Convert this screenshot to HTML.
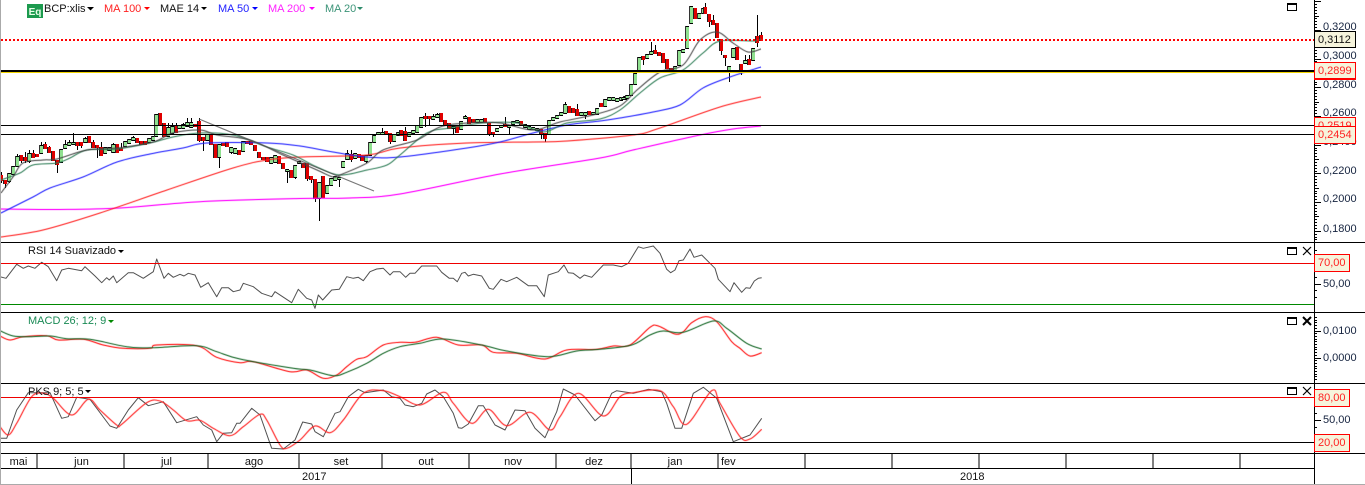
<!DOCTYPE html>
<html><head><meta charset="utf-8"><title>BCP:xlis</title>
<style>
html,body{margin:0;padding:0;background:#fff;width:1365px;height:485px;overflow:hidden}
#w{position:relative;width:1365px;height:485px;overflow:hidden;font:11px/13px "Liberation Sans",Arial,sans-serif;color:#111}
svg{position:absolute;left:0;top:0}
.t{position:absolute;white-space:nowrap}
.a{position:absolute;left:1323px;white-space:nowrap;color:#15233f}
.b{position:absolute;left:1314px;box-sizing:border-box;background:#f6f4dc;border:1px solid #f00;color:#f22;height:17px;line-height:16px;padding-left:3px;width:42px}
.c{text-align:center;position:absolute;top:456px;white-space:nowrap}
</style></head><body><div id="w">
<svg id="s" width="1365" height="485" viewBox="0 0 1365 485" xmlns="http://www.w3.org/2000/svg">
<g id="cv"></g>
<g id="ln" fill="none"></g>
<g id="fx" shape-rendering="crispEdges">
<rect x="0" y="0" width="1" height="485" fill="#aaa"/>
<rect x="0" y="484" width="1365" height="1" fill="#aaa"/>
<line x1="1" y1="40" x2="1314" y2="40" stroke="#f00" stroke-width="2" stroke-dasharray="2 2"/>
<rect x="1" y="70" width="1313" height="2" fill="#000"/>
<rect x="1" y="72" width="1313" height="1" fill="#f2d400"/>
<rect x="1" y="125" width="1313" height="1" fill="#000"/>
<rect x="1" y="134" width="1313" height="1" fill="#000"/>
<rect x="1" y="263" width="1313" height="1" fill="#e00"/>
<rect x="1" y="304" width="1313" height="1" fill="#080"/>
<rect x="1" y="397" width="1313" height="1" fill="#e00"/>
<rect x="1" y="442" width="1313" height="1" fill="#000"/>
<rect x="1" y="242" width="1364" height="1" fill="#000"/>
<rect x="1" y="312" width="1364" height="1" fill="#000"/>
<rect x="1" y="383" width="1364" height="1" fill="#000"/>
<rect x="1" y="453" width="1364" height="1" fill="#000"/>
<rect x="1" y="468" width="1313" height="1" fill="#000"/>
<rect x="1314" y="0" width="1" height="484" fill="#000"/>
<rect x="631" y="468" width="1" height="16" fill="#000"/>
<path id="vt" d="M37 453v15M124 453v15M208 453v15M299 453v15M382 453v15M469 453v15M556 453v15M631 453v15M718 453v15M805 453v15M892 453v15M979 453v15M1066 453v15M1153 453v15M1240 453v15" stroke="#000" fill="none"/>
<path id="tk" stroke="#000" fill="none"/>
<g fill="none" stroke="#000">
<rect x="1287.5" y="3.5" width="9" height="7"/><path d="M1287 4.5h10"/>
<rect x="1287.5" y="247.5" width="9" height="7"/><path d="M1287 248.5h10"/>
<rect x="1287.5" y="317.5" width="9" height="7"/><path d="M1287 318.5h10"/>
<rect x="1287.5" y="387.5" width="9" height="7"/><path d="M1287 388.5h10"/>
</g>
</g>
<g stroke="#000" fill="none">
<path d="M1303 247l8 8M1311 247l-8 8" stroke-width="1.2"/>
<path d="M1303 317l8 8M1311 317l-8 8" stroke-width="2"/>
<path d="M1303 387l8 8M1311 387l-8 8" stroke-width="1.2"/>
</g>
<g fill="#000">
<path d="M87 7h7l-3.5 3.5z"/>
<path d="M144 7h6l-3 3z" fill="#f00"/>
<path d="M201 7h6l-3 3z"/>
<path d="M252 7h6l-3 3z" fill="#00f"/>
<path d="M309 7h6l-3 3z" fill="#f0f"/>
<path d="M357 7h6l-3 3z" fill="#2e8b6b"/>
<path d="M118 250h6l-3 3z"/>
<path d="M108 320h6l-3 3z" fill="#080"/>
<path d="M85 390h6l-3 3z"/>
</g>
<rect x="27" y="4" width="16" height="14" fill="#1c9a4e"/>
<text x="35" y="15" fill="#e8ffe8" font-family="Liberation Sans" font-size="10" font-weight="bold" text-anchor="middle">Eq</text>
</svg>
<div class="t" style="left:44px;top:3px">BCP:xlis</div>
<div class="t" style="left:104px;top:3px;color:#f22">MA 100</div>
<div class="t" style="left:160px;top:3px;color:#111">MAE 14</div>
<div class="t" style="left:218px;top:3px;color:#22f">MA 50</div>
<div class="t" style="left:268px;top:3px;color:#f2f">MA 200</div>
<div class="t" style="left:325px;top:3px;color:#3c9478">MA 20</div>
<div class="t" style="left:28px;top:245px">RSI 14 Suavizado</div>
<div class="t" style="left:28px;top:315px;color:#1a8a55">MACD 26; 12; 9</div>
<div class="t" style="left:28px;top:386px">PKS 9; 5; 5</div>
<div class="a" style="top:21px">0,3200</div>
<div class="a" style="top:50px">0,3000</div>
<div class="a" style="top:79px">0,2800</div>
<div class="a" style="top:107px">0,2600</div>
<div class="a" style="top:136px">0,2400</div>
<div class="a" style="top:165px">0,2200</div>
<div class="a" style="top:193px">0,2000</div>
<div class="a" style="top:223px">0,1800</div>
<div class="a" style="top:278px">50,00</div>
<div class="a" style="top:325px">0,0100</div>
<div class="a" style="top:352px">0,0000</div>
<div class="a" style="top:414px">50,00</div>
<div class="b" style="top:31px;border-color:#000;color:#111">0,3112</div>
<div class="b" style="top:62px;height:18px;border-width:1px 1px 2px 1px">0,2899</div>
<div class="b" style="top:117px">0,2519</div>
<div class="b" style="top:126px;height:18px">0,2454</div>
<div class="b" style="top:254px;width:36px;height:18px">70,00</div>
<div class="b" style="top:389px;width:36px;height:18px">80,00</div>
<div class="b" style="top:434px;width:36px;height:18px">20,00</div>
<div class="c" style="left:0;width:37px">mai</div>
<div class="c" style="left:38px;width:87px">jun</div>
<div class="c" style="left:125px;width:83px">jul</div>
<div class="c" style="left:209px;width:90px">ago</div>
<div class="c" style="left:300px;width:82px">set</div>
<div class="c" style="left:383px;width:86px">out</div>
<div class="c" style="left:470px;width:86px">nov</div>
<div class="c" style="left:557px;width:74px">dez</div>
<div class="c" style="left:632px;width:86px">jan</div>
<div class="t" style="left:721px;top:456px">fev</div>
<div class="t" style="left:302px;top:471px">2017</div>
<div class="t" style="left:960px;top:471px">2018</div>
</div>
<script>
var NS='http://www.w3.org/2000/svg';
function mk(p,n,a){var e=document.createElementNS(NS,n);for(var k in a)e.setAttribute(k,a[k]);p.appendChild(e);return e}
var c1=[[4,0,525,540,515,550],[16,0,541,549,0,565],[28,1,520,543,0,550],[40,1,497,522,0,0],[52,1,469,497,462,0],[64,0,465,480,0,490],[76,0,470,480,455,490],[88,1,460,482,450,490],[100,0,460,470,450,0],[112,0,462,466,0,0],[124,1,435,458,425,0],[136,0,433,445,425,0],[148,0,441,455,437,460],[160,0,453,481,0,0],[172,0,481,493,0,520],[184,1,447,485,0,0],[196,1,432,445,420,0],[208,1,427,435,420,0],[220,1,427,432,400,0],[232,0,427,435,0,450],[244,0,427,435,0,445],[256,1,413,426,410,0],[268,0,408,425,0,0],[280,0,425,440,420,0],[292,0,434,440,0,475],[304,0,440,465,425,0],[316,1,442,458,0,0],[328,1,440,450,0,0],[340,1,432,455,428,0],[352,0,432,455,0,0],[364,0,445,450,430,0],[376,1,423,438,0,0],[388,1,416,428,0,0],[400,1,411,420,407,0],[412,0,414,427,0,0],[424,0,423,432,0,0],[436,0,423,431,0,0],[448,1,415,426,0,0],[460,1,407,420,0,0],[469,1,343,407,0,0],[481,0,339,375,0,0],[493,0,370,407,0,0],[505,1,380,407,368,0],[517,1,378,398,368,0],[529,0,375,397,368,0],[538,1,376,385,0,0],[550,1,372,385,368,0],[562,1,365,378,355,0],[574,1,367,382,355,0],[586,0,372,378,0,0],[598,0,362,421,355,425],[610,0,411,420,0,452],[622,1,403,420,0,0],[634,0,405,432,0,0],[646,0,432,472,0,0],[658,1,432,472,0,503],[670,0,428,436,0,0],[682,0,425,438,0,0],[694,1,440,455,0,462],[706,1,443,458,0,0],[718,0,450,462,0,0],[730,1,424,452,0,0],[742,0,424,430,0,0],[754,0,422,432,0,0],[766,0,435,450,0,0],[778,0,456,470,0,0],[790,0,470,475,0,0],[802,0,470,482,0,0],[814,1,470,488,0,0],[826,1,466,485,0,0],[838,0,468,488,0,0],[850,0,490,505,0,0],[862,1,508,513,0,548],[874,0,510,530,0,0],[886,1,495,530,0,538],[898,1,482,490,0,0],[910,0,490,500,0,0],[922,0,490,533,0,543],[934,0,528,536,0,550],[946,0,537,595,0,605],[958,1,546,595,0,662],[970,0,527,590,0,0],[982,1,555,578,0,0],[994,1,535,555,0,0],[1006,1,527,540,0,0],[1018,1,530,538,0,562],[1030,1,484,502,0,0],[1042,1,458,476,450,0],[1054,0,462,478,450,485],[1066,1,460,475,0,0],[1076,0,462,470,0,0],[1086,0,466,481,0,0],[1098,1,465,482,0,488],[1110,1,425,465,0,0],[1122,1,405,425,0,0],[1134,1,397,403,0,0],[1146,1,395,402,385,0],[1158,0,393,403,0,0],[1170,0,400,423,0,433],[1182,1,403,423,0,0],[1194,1,397,404,0,0]];
var c2=[[304,0,150,165,0,0],[316,0,153,180,140,0],[328,1,157,167,0,0],[340,1,150,160,0,0],[352,1,135,157,0,0],[364,1,112,140,0,0],[376,0,108,115,100,140],[388,0,108,115,0,138],[400,1,108,116,102,0],[412,1,102,112,98,0],[424,0,100,122,0,0],[436,0,120,133,0,0],[448,0,130,143,0,0],[460,1,137,143,0,162],[472,0,135,155,0,0],[484,1,122,147,0,0],[496,1,108,115,105,0],[508,0,110,128,0,0],[520,0,118,127,0,0],[532,1,118,127,0,0],[544,1,118,127,0,0],[556,0,115,127,0,0],[568,0,130,158,0,168],[580,0,157,162,0,170],[592,1,145,152,0,0],[604,1,135,142,0,0],[616,0,132,138,110,0],[628,1,135,142,0,162],[640,1,123,132,0,0],[652,1,120,127,0,0],[664,0,123,135,0,0],[676,1,132,140,0,0],[688,1,138,147,0,0],[700,1,142,148,0,0],[712,1,143,148,0,0],[724,0,148,162,0,178],[736,0,158,175,0,185],[748,1,120,162,0,0],[760,1,112,120,0,0],[772,1,105,113,0,0],[784,1,97,105,0,0],[796,1,72,100,67,0],[808,0,77,95,0,0],[820,0,85,95,0,0],[832,0,88,105,72,0],[844,1,95,105,0,0],[856,1,95,105,0,118],[868,0,93,103,0,0],[880,1,95,103,0,0],[892,1,85,103,0,0],[904,0,70,78,0,0],[916,1,57,77,0,0],[928,1,52,60,0,0],[940,1,52,60,0,0],[952,1,55,62,0,0],[964,1,52,60,0,0],[976,1,47,58,0,0]];
var c3=[[8,1,292,298,0,0],[20,1,286,294,0,0],[32,1,252,285,0,0],[44,1,220,252,0,0],[56,1,172,210,0,0],[68,0,168,177,0,195],[80,1,163,175,0,0],[92,1,153,162,127,0],[104,0,150,158,135,0],[116,0,156,165,0,0],[128,0,158,185,0,0],[140,0,178,205,0,0],[152,0,204,212,0,0],[164,1,198,212,0,0],[176,1,150,195,0,0],[188,1,148,156,0,0],[200,1,78,145,0,0],[212,1,18,68,0,0],[224,0,24,55,0,0],[236,1,38,55,0,0],[248,1,24,38,0,0],[256,0,20,40,10,0],[268,0,42,62,0,80],[280,0,60,72,45,0],[292,0,70,110,0,0],[304,0,118,150,0,165],[316,0,165,172,0,198],[328,1,198,212,0,245],[340,1,143,172,0,0],[352,0,140,178,0,0],[364,0,192,212,0,225],[376,1,180,188,165,0],[388,0,176,192,165,0],[400,1,143,180,0,0],[412,0,108,125,45,140],[424,0,105,120,97,0]];
var cv=document.getElementById('cv');
function dc(arr,ox,oy){arr.forEach(function(d){
 var n=Math.round(ox+d[0]/3),t=Math.round(oy+d[2]/3),b=Math.round(oy+d[3]/3);
 var h=d[4]?oy+d[4]/3:t,l=d[5]?oy+d[5]/3:b;
 mk(cv,'rect',{x:n,y:Math.round(h),width:1,height:Math.max(1,Math.round(l)-Math.round(h)),fill:'#000','shape-rendering':'crispEdges'});
 var ht=Math.max(2,b-t);
 if(d[1]){
  mk(cv,'rect',{x:n-1,y:t,width:3,height:ht+1,fill:'#000','shape-rendering':'crispEdges'});
  mk(cv,'rect',{x:n-1,y:t+1,width:3,height:Math.max(1,ht-1),fill:'#8fe08f','shape-rendering':'crispEdges'});
  mk(cv,'rect',{x:n-2,y:t,width:1,height:ht+1,fill:'#333','shape-rendering':'crispEdges'});
 }else{
  mk(cv,'rect',{x:n-1,y:t,width:3,height:ht+1,fill:'#e00000','shape-rendering':'crispEdges'});
  mk(cv,'rect',{x:n-2,y:t,width:1,height:ht+1,fill:'#222','shape-rendering':'crispEdges'});
 }
});}
dc(c1,0,0);dc(c2,300,80);dc(c3,620,0);
var ln=document.getElementById('ln');
function sm(p){var d='M'+p[0][0]+' '+p[0][1];for(var i=0;i<p.length-1;i++){var a=p[i-1]||p[i],b=p[i],c=p[i+1],e=p[i+2]||c;
 d+='C'+(b[0]+(c[0]-a[0])/6).toFixed(1)+' '+(b[1]+(c[1]-a[1])/6).toFixed(1)+' '+(c[0]-(e[0]-b[0])/6).toFixed(1)+' '+(c[1]-(e[1]-b[1])/6).toFixed(1)+' '+c[0]+' '+c[1]}return d}
function pl(pts,col,w,op){
 var d=sm(pts);
 mk(ln,'path',{d:d,stroke:col,'stroke-width':2.2,'stroke-opacity':.22});
 mk(ln,'path',{d:d,stroke:col,'stroke-width':w||1,'stroke-opacity':op||.75});
}
function rl(pts,col,w,op){mk(ln,'polyline',{points:pts.map(function(p){return p[0]+','+p[1]}).join(' '),stroke:col,'stroke-width':w||1,'stroke-opacity':op||.75,'stroke-linejoin':'round'})}
function z(a,ox,oy){return a.map(function(p){return [+(ox+p[0]/3).toFixed(1),+(oy+p[1]/3).toFixed(1)]})}
pl([[1,209],[60,209.5],[120,208],[200,201.7],[300,198.5],[350,198],[400,194],[500,174],[600,158],[633,150],[700,135],[733,129],[761,126]],'#f0f',1,.85);
pl([[1,237],[43,230],[100,213],[167,190],[233,168],[267,160],[300,157],[367,155],[400,148],[467,143],[533,142],[567,141],[633,135],[657,129],[720,107],[761,97]],'#f22',1,.75);
pl([[1,213],[33,197],[50,188],[83,177],[117,162],[150,154],[183,148],[207,143],[267,143],[300,146],[333,152],[367,157],[400,157],[467,148],[500,142],[533,133],[567,125],[600,121],[620,118],[653,112],[680,105],[703,88],[730,77],[761,67]],'#22f',1,.75);
pl([[1,180],[20,173],[33,165],[57,163],[70,158],[87,150],[117,149],[150,143],[173,137],[200,133],[233,135],[267,147],[293,155],[317,167],[340,175],[367,170],[387,165],[400,155],[427,133],[450,128],[483,123],[517,123],[543,132],[567,123],[600,119],[620,110],[640,93],[660,78],[683,70],[703,53],[720,41],[753,41],[761,39]],'#2e7d55',1,.7);
pl([[1,193],[13,177],[23,163],[43,160],[57,159],[87,150],[117,148],[153,142],[173,133],[200,130],[217,135],[250,140],[283,155],[317,170],[333,177],[340,175],[367,163],[383,150],[417,140],[440,127],[467,123],[500,123],[533,130],[560,122],[593,115],[620,106],[637,90],[660,72],[683,65],[700,40],[717,32],[733,43],[748,52],[761,49]],'#444',1,.7);
rl([[199,119],[374,191]],'#555',1.2,.8);
var rsi=z([[0,110],[18,115],[50,73],[70,85],[85,78],[105,85],[125,67],[145,80],[170,122],[185,90],[205,85],[245,92],[255,80],[285,108],[305,128],[320,113],[328,120],[340,108],[350,128],[385,98],[400,98],[430,115],[460,95],[470,57],[492,115],[505,100],[520,112],[540,103],[552,108],[565,100],[585,105],[602,142],[625,128],[650,170],[665,143],[685,143],[700,155],[720,150],[730,130],[760,140],[785,160],[815,170],[825,155],[875,188],[895,148],[920,175],[935,180],[945,205],[955,165],[968,180],[995,150],[1018,148],[1040,110],[1060,115],[1075,112],[1090,122],[1110,95],[1130,87],[1150,85],[1170,105],[1180,95],[1200,95]],0,240).concat(z([[17,112],[30,100],[45,100],[65,78],[110,78],[125,97],[148,115],[160,115],[172,125],[185,100],[195,97],[205,108],[220,103],[245,108],[268,145],[280,148],[303,118],[320,125],[350,112],[385,137],[410,137],[433,170],[445,105],[475,95],[492,75],[505,98],[520,100],[540,115],[553,105],[575,112],[610,75],[640,75],[665,80],[685,70],[715,20],[730,25],[760,18],[780,40],[800,88],[812,98],[825,90],[837,62],[850,60],[870,27],[882,52],[905,45],[945,85],[955,118],[990,155],[1002,128],[1025,157],[1038,143],[1050,145],[1063,123],[1075,115],[1085,113]],400,240));
rl(rsi,'#333',1,.85);
var mr=z([[0,288],[30,300],[70,290],[140,287],[175,300],[250,298],[310,315],[370,325],[450,325],[470,315],[590,317],[650,352],[720,368],[760,365],[870,395],[920,390],[970,415],[1010,405],[1040,380],[1070,358],[1100,350],[1150,315],[1200,307]],0,240).concat(z([[45,307],[110,292],[175,315],[245,315],[280,337],[350,340],[435,357],[500,330],[590,328],[640,318],[690,315],[750,262],[775,258],[825,282],[850,275],[875,248],[915,230],[950,245],[995,305],[1020,325],[1050,348],[1085,338]],400,240));
var mg=z([[0,272],[40,288],[90,290],[150,288],[200,296],[270,298],[380,320],[460,323],[590,317],[650,335],[720,357],[880,385],[930,390],[1000,407],[1040,397],[1100,370],[1150,340],[1200,320]],0,240).concat(z([[60,310],[130,297],[245,315],[320,333],[445,350],[530,333],[600,328],[695,315],[750,285],[790,273],[850,277],[940,243],[980,265],[1040,310],[1085,327]],400,240));
pl(mr,'#f11',1,.8);pl(mg,'#1c6b2c',1,.8);
var pb=z([[0,595],[20,595],[50,510],[85,458],[150,458],[185,535],[205,530],[230,472],[270,478],[330,558],[350,565],[385,510],[415,473],[445,497],[490,485],[530,548],[590,530],[610,555],[635,570],[650,605],[670,580],[695,578],[710,550],[720,550],[755,505],[780,525],[815,625],[850,627],[885,600],[908,546],[935,552],[945,575],[970,590],[1005,520],[1020,515],[1045,470],[1075,448],[1095,458],[1150,450],[1175,470],[1200,475]],0,240).concat(z([[15,495],[40,500],[65,490],[80,462],[105,450],[130,470],[160,520],[175,563],[185,565],[205,552],[235,497],[250,497],[285,555],[315,570],[345,510],[375,512],[405,565],[435,593],[470,515],[490,447],[525,465],[585,542],[605,525],[635,460],[650,452],[700,460],[745,448],[785,455],[800,490],[825,565],[845,565],[880,460],[910,442],[950,475],[1000,605],[1050,585],[1085,535]],400,240));
var pr=z([[0,560],[25,585],[50,550],[95,470],[130,460],[160,475],[215,525],[265,478],[300,510],[350,555],[365,553],[440,488],[480,483],[520,510],[560,542],[600,541],[640,565],[690,587],[730,560],[780,523],[800,540],[840,615],[860,625],[900,600],[945,558],[990,578],[1030,540],[1090,460],[1150,452],[1200,470]],0,240).concat(z([[60,495],[130,457],[160,490],[215,550],[265,508],[320,557],[390,517],[450,570],[480,530],[535,460],[610,528],[660,470],[700,458],[780,452],[820,500],[860,553],[935,452],[960,490],[1020,590],[1050,597],[1085,568]],400,240));
rl(pb,'#333',1,.85);pl(pr,'#f22',1,.8);
var d='',i,y;
for(i=0;i<85;i++){y=Math.round(27+(i-9)*2.87)+.5;if(y<0||y>242)continue;d+='M1314 '+y+'h'+(i%10==0?7:(i%5==0?5:3))}
for(i=0;i<8;i++){y=Math.round(250+i*6.7)+.5;d+='M1314 '+y+'h3'}
for(i=0;i<24;i++){y=Math.round(317+i*2.7)+.5;d+='M1314 '+y+'h'+((i==5||i==15)?7:3)}
for(i=0;i<8;i++){y=Math.round(392+i*7)+.5;d+='M1314 '+y+'h3'}
d+='M1314 420.5h7M1314 284.5h7';
document.getElementById('tk').setAttribute('d',d);
</script>
</body></html>
